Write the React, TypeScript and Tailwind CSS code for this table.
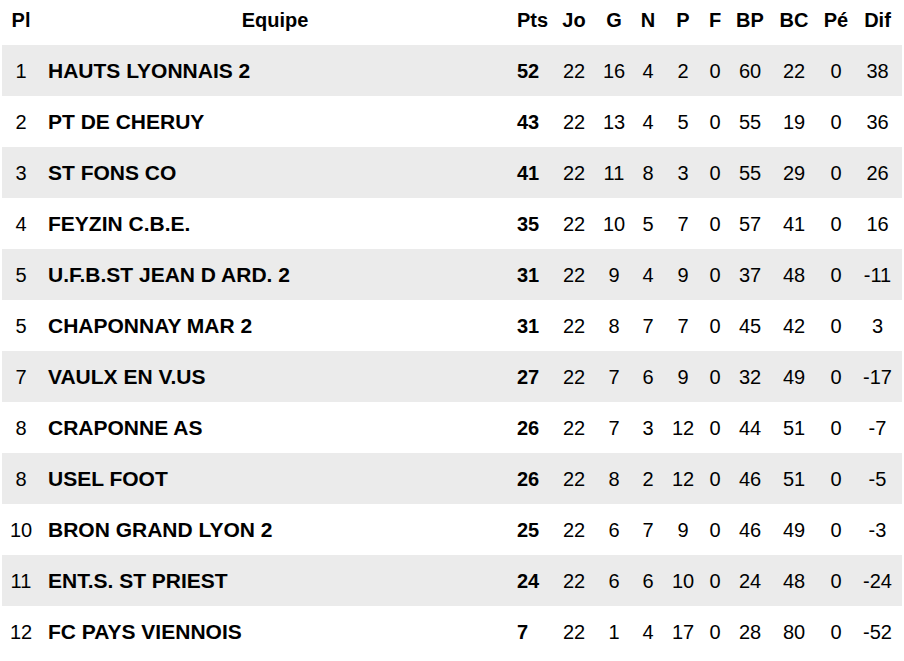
const rows = [
  ["1", "HAUTS LYONNAIS 2", "52", "22", "16", "4", "2", "0", "60", "22", "0", "38"],
  ["2", "PT DE CHERUY", "43", "22", "13", "4", "5", "0", "55", "19", "0", "36"],
  ["3", "ST FONS CO", "41", "22", "11", "8", "3", "0", "55", "29", "0", "26"],
  ["4", "FEYZIN C.B.E.", "35", "22", "10", "5", "7", "0", "57", "41", "0", "16"],
  ["5", "U.F.B.ST JEAN D ARD. 2", "31", "22", "9", "4", "9", "0", "37", "48", "0", "-11"],
  ["5", "CHAPONNAY MAR 2", "31", "22", "8", "7", "7", "0", "45", "42", "0", "3"],
  ["7", "VAULX EN V.US", "27", "22", "7", "6", "9", "0", "32", "49", "0", "-17"],
  ["8", "CRAPONNE AS", "26", "22", "7", "3", "12", "0", "44", "51", "0", "-7"],
  ["8", "USEL FOOT", "26", "22", "8", "2", "12", "0", "46", "51", "0", "-5"],
  ["10", "BRON GRAND LYON 2", "25", "22", "6", "7", "9", "0", "46", "49", "0", "-3"],
  ["11", "ENT.S. ST PRIEST", "24", "22", "6", "6", "10", "0", "24", "48", "0", "-24"],
  ["12", "FC PAYS VIENNOIS", "7", "22", "1", "4", "17", "0", "28", "80", "0", "-52"],
]

const headers = ["Pl", "Equipe", "Pts", "Jo", "G", "N", "P", "F", "BP", "BC", "Pé", "Dif"]

const cols =
  "grid grid-cols-[38px_466px_38px_48px_28px_36px_30px_30px_36px_48px_32px_47px] gap-x-[2px] mx-[2px] items-center"

function cellClass(i: number) {
  if (i === 1) return "pl-[6px] font-bold whitespace-nowrap text-[21px]"
  if (i === 2) return "pl-[7px] font-bold"
  return "text-center"
}

export default function App() {
  return (
    <div
      className="w-[904px] min-h-[661px] bg-white text-black text-[20px]"
      style={{ fontFamily: '"Liberation Sans", Arial, sans-serif' }}
    >
      {/* Header */}
      <div className={`${cols} h-[45px] pb-[5px] font-bold`}>
        {headers.map((h, i) => (
          <div key={h} className={i === 2 ? "pl-[7px]" : "text-center"}>
            {h}
          </div>
        ))}
      </div>

      {rows.map((row, r) => (
        <div key={r} className={`${cols} h-[51px] ${r % 2 === 0 ? "bg-[#ebebeb]" : ""}`}>
          {row.map((v, i) => (
            <div key={i} className={cellClass(i)}>
              {v}
            </div>
          ))}
        </div>
      ))}
    </div>
  )
}
